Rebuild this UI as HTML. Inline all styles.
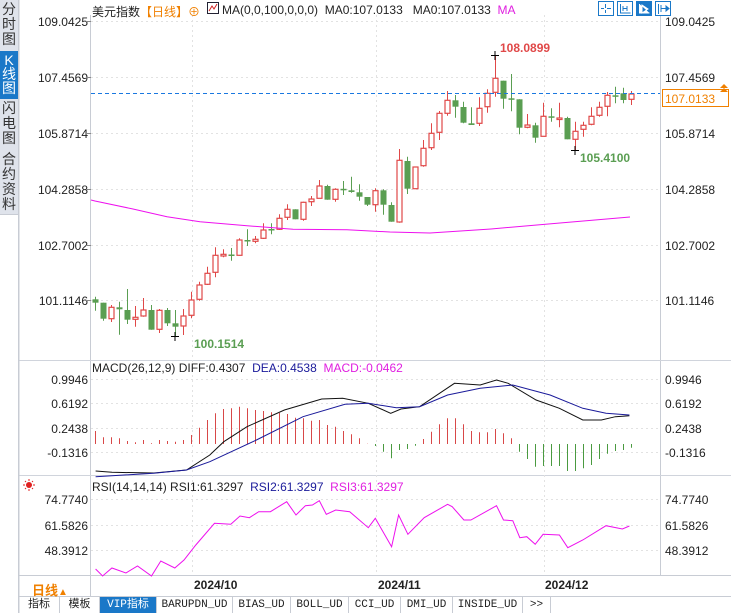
<!DOCTYPE html>
<html><head><meta charset="utf-8"><style>
body{margin:0;width:731px;height:613px;overflow:hidden;background:#fff;font-family:"Liberation Sans","Noto Sans CJK SC",sans-serif;position:relative}
.sb{position:absolute;left:0;width:18px;background:#dfe3eb;color:#333;font-size:14px;line-height:15px;text-align:center;border-bottom:1px solid #c8ccd4}
.lab{position:absolute;font-size:12px;color:#222}
.tab{position:absolute;top:597px;height:16px;border-right:1px solid #c8ccd4;font:11px "Liberation Mono","Noto Sans CJK SC",monospace;color:#222;text-align:center;line-height:16px}
</style></head><body>
<div class="sb" style="top:0;height:49px;padding-top:2px">分<br>时<br>图</div>
<div class="sb" style="top:51px;height:46px;background:#1a78c8;color:#fff;padding-top:2px;line-height:14px">K<br>线<br>图</div>
<div class="sb" style="top:99px;height:49px;padding-top:2px">闪<br>电<br>图</div>
<div class="sb" style="top:150px;height:62px;padding-top:2px">合<br>约<br>资<br>料</div>
<svg id="s" width="731" height="613" style="position:absolute;left:0;top:0"></svg>
<div class="lab" style="left:92px;top:3px;font-size:12px">美元指数<span style="color:#f08000">【日线】</span><span style="color:#f08000">⊕</span></div>
<div class="lab" style="left:222px;top:3px">MA(0,0,100,0,0,0) &nbsp;MA0:107.0133 &nbsp;&nbsp;MA0:107.0133 &nbsp;<span style="color:#e020e0">MA</span></div>
<div class="lab" style="left:92px;top:361px">MACD(26,12,9) DIFF:0.4307 &nbsp;<span style="color:#1a1a9a">DEA:0.4538</span> &nbsp;<span style="color:#e020e0">MACD:-0.0462</span></div>
<div class="lab" style="left:92px;top:480px">RSI(14,14,14) RSI1:61.3297 &nbsp;<span style="color:#1a1a9a">RSI2:61.3297</span> &nbsp;<span style="color:#e020e0">RSI3:61.3297</span></div>
<div class="lab" style="left:32px;top:580px;color:#f08000;font-weight:bold;font-size:13px">日线<span style="font-size:10px">▲</span></div>
<div class="tab" style="left:19px;width:40px">指标</div>
<div class="tab" style="left:60px;width:39px">模板</div>
<div class="tab" style="left:100px;width:56px;background:#1a78c8;color:#fff">VIP指标</div>
<div class="tab" style="left:157px;width:75px">BARUPDN_UD</div>
<div class="tab" style="left:233px;width:57px">BIAS_UD</div>
<div class="tab" style="left:291px;width:57px">BOLL_UD</div>
<div class="tab" style="left:349px;width:51px">CCI_UD</div>
<div class="tab" style="left:401px;width:51px">DMI_UD</div>
<div class="tab" style="left:453px;width:69px">INSIDE_UD</div>
<div class="tab" style="left:523px;width:27px">&gt;&gt;</div>
<script>
var S='';
function L(x1,y1,x2,y2,c,w,d){S+='<line x1="'+x1+'" y1="'+y1+'" x2="'+x2+'" y2="'+y2+'" stroke="'+c+'" stroke-width="'+(w||1)+'"'+(d?' stroke-dasharray="'+d+'"':'')+'/>';}
function T(x,y,t,c,a,sz,fw){S+='<text x="'+x+'" y="'+y+'" fill="'+(c||'#222')+'" font-size="'+(sz||12)+'" text-anchor="'+(a||'start')+'" font-family="Liberation Sans,sans-serif"'+(fw?' font-weight="bold"':'')+'>'+t+'</text>';}
function P(pts,c){S+='<polyline fill="none" stroke="'+c+'" stroke-width="1" points="'+pts.join(' ')+'"/>';}
L(18.5,0,18.5,613,'#c8ccd4');L(90.5,15,90.5,575,'#c8ccd4');L(660.5,15,660.5,575,'#c8ccd4');
L(19,360.5,731,360.5,'#d0d4dc');L(19,475.5,731,475.5,'#d0d4dc');L(19,575.5,731,575.5,'#c8ccd4');L(19,596.5,731,596.5,'#c8ccd4');
L(90.5,575,90.5,597,'#c8ccd4');L(19,0,19,613,'#c8ccd4');
var ph=[[21,'109.0425'],[77,'107.4569'],[133,'105.8714'],[189,'104.2858'],[245,'102.7002'],[300,'101.1146']];
ph.forEach(function(p){L(91,p[0]+.5,660,p[0]+.5,'#e2e2e2',1,'2,3');T(88,p[0]+5,p[1],'#222','end');T(665,p[0]+5,p[1]);L(86,p[0]+.5,91,p[0]+.5,'#888');});
[[379,'0.9946'],[403,'0.6192'],[428,'0.2438'],[452,'-0.1316']].forEach(function(p){L(91,p[0]+.5,660,p[0]+.5,'#e2e2e2',1,'2,3');T(88,p[0]+5,p[1],'#222','end');T(665,p[0]+5,p[1]);});
[[499,'74.7740'],[525,'61.5826'],[550,'48.3912']].forEach(function(p){L(91,p[0]+.5,660,p[0]+.5,'#e2e2e2',1,'2,3');T(88,p[0]+5,p[1],'#222','end');T(665,p[0]+5,p[1]);});
[192,376,544].forEach(function(x){L(x+.5,15,x+.5,575,'#e2e2e2',1,'2,3');});
T(194,589,'2024/10','#222','start',12,1);T(378,589,'2024/11','#222','start',12,1);T(545,589,'2024/12','#222','start',12,1);
var C=[[299.3,302.7,296.7,310.7,0],[302.7,318.7,302.7,320.7,0],[307.3,318.7,305,322,1],[307.3,309.3,301.7,334.7,0],[310,319.7,289,324,0],[317.3,319.3,306,326.7,1],[310,316,298,316.7,1],[310,329.7,305,329.7,0],[310.3,329.3,309,333,1],[310,323.3,308,326,0],[323.3,326.7,310,336,0],[316,326,309,335,1],[300,315.3,291.7,318.3,1],[285,299.3,281.7,300.7,1],[273.3,284.3,266.7,285,1],[255.3,272.3,247.3,277.3,1],[254.3,256,249.3,257.3,1],[254.5,255.5,248,260.7,0],[240,255.3,238.3,255.7,1],[240,241.3,229.3,246,0],[239.3,241.3,236,243.3,1],[230,238.3,223.3,239,1],[229,230.3,223.3,234.3,0],[218.3,229.3,214.3,230,1],[209.3,217.3,204.3,220,1],[209.3,219.3,209.3,219.3,0],[202.3,219.3,201.7,220.7,1],[199,201.7,196,206,1],[186,198.3,180,198.3,1],[186,199.7,184.7,199.7,0],[189.3,199.3,188.3,201.7,1],[188.8,189.8,181,195,0],[190.3,192,176.7,192.7,0],[192.3,196.7,184.3,200.7,0],[197,204.7,197,206,0],[190.7,204.7,188.3,211.7,1],[190.3,204.7,189.3,214.7,0],[205,221.7,202.3,221.7,0],[160.3,222,149,222.7,1],[161,188.7,156.7,194,0],[167,188.7,167,188.7,1],[148.3,165.7,140,166.7,1],[133.3,147.7,123.3,150,1],[113.3,132.3,111,140,1],[100.3,113.3,91,115.7,1],[100.3,106.7,95,117.7,0],[107,122.7,101.7,123.3,0],[123.3,125,107.3,125,0],[108.3,123.3,97.3,126,1],[93.3,106.7,89.3,112.7,1],[78.3,92.3,55,96.7,1],[80.7,98.7,80.7,108.7,0],[98.3,99.3,74,111.3,0],[99.3,127.7,99.3,134.3,0],[125,127.3,114,128.3,1],[125.3,137.7,122.7,142.7,0],[116.3,136.3,102.7,136.3,1],[116.3,117.3,108.3,121.7,0],[118,118.7,102.7,127.3,1],[118,139.3,116.7,139.3,0],[131.3,139.3,121.7,150,1],[125.3,129.3,121.7,136.7,1],[116.3,124.3,107.3,125.3,1],[107.3,115.3,101.7,116.7,1],[95.3,106.3,92,116.3,1],[95.3,96.7,86.7,103.3,0],[93.3,100,87.7,103.3,0],[94,99.3,91,105,1]];
C.forEach(function(c,i){var x=Math.round(95.3+8*i)+.5;var col=c[4]?'#e04848':'#5a9e52';
L(x,c[2],x,c[3],col);var h=Math.max(1.5,c[1]-c[0]);
if(c[4])S+='<rect x="'+(x-2.5)+'" y="'+c[0]+'" width="5" height="'+h+'" fill="#fff" stroke="'+col+'" stroke-width="1.2"/>';
else S+='<rect x="'+(x-3)+'" y="'+c[0]+'" width="6" height="'+h+'" fill="'+col+'"/>';});
P(['91,200','95,201','133,209','167,216.7','200,221.7','247,225.7','293,229.3','347,229.7','390,232','430,233','491,229','560,223','630,217'],'#ee10ee');
L(91,93.5,660,93.5,'#1a78e0',1,'4,3');
S+='<rect x="662.5" y="89.5" width="66" height="17" fill="#fff" stroke="#f08000"/>';T(665,103,'107.0133','#f08000');
S+='<path d="M720 92 l4 -4 l4 4 z M720 88 l4 -4 l4 4 z" fill="#f08000"/>';
T(500,52,'108.0899','#e04848','start',12,1);L(491,55.5,499,55.5,'#000');L(495,51,495,60,'#000');
T(580,162,'105.4100','#5a9e52','start',12,1);L(571,150.5,579,150.5,'#000');L(575,146,575,155,'#000');
T(194,348,'100.1514','#5a9e52','start',12,1);L(171,336.5,179,336.5,'#000');L(175,332,175,341,'#000');
[598,617,636,655].forEach(function(x,i){S+='<rect x="'+x+'.5" y="1.5" width="15" height="14" fill="'+(i==2?'#1a78c8':'#fff')+'" stroke="#1a78c8"/>';});
S+='<path d="M605.5 4v4M605.5 10v3M601 8.5h3M607 8.5h4" stroke="#1a78c8"/><path d="M620.5 4v9h10M623 6v5M627 6v5M623 8.5h4" stroke="#1a78c8" fill="none"/><path d="M639.5 4v9h10M642 5l6 4-6 4z" stroke="#fff" fill="#fff"/><path d="M658.5 4v10M661 5v7M661 8.5h5M666 6l3 2.5-3 2.5z" stroke="#1a78c8" fill="#1a78c8"/>';
S+='<rect x="207.5" y="2.5" width="11" height="11" fill="#fff" stroke="#223"/><path d="M209 11l3-5 2 3 3-5" stroke="#d02020" fill="none"/>';
var H=[431,437.3,437.3,438.3,441,442.3,440,443.3,440,441,441.7,440,435,427.7,420,413.3,409,408.3,406.7,408.3,410,411,412.3,413,414,417.7,418.3,420.7,420,425,426.7,431,434.3,438.3,443.7,446,451.7,458.3,450,449,445.7,439,431.7,424.3,418.3,418.3,424.3,431,432.3,432.3,429,433.3,438.3,451.7,459,466.7,466,466,466,471,471,468.3,465,459,453.7,451,450,447.7];
H.forEach(function(y,i){var x=Math.round(95.3+8*i)+.5;L(x,444,x,y,y<444?'#d84848':'#4a9a40');});
P(['95.6,471','112,472.3','153.8,473','186.5,470','209.8,455','223.8,441.7','247,426.7','284.4,410','321.7,399','342.7,398.3','368.3,403.3','390.7,413.3','401,409','419.6,406.7','454.5,383.3','480.2,385','496.5,380','508.2,383.3','536.1,400','559.4,408.3','582.8,420','601.4,420','615.4,416.7','629.4,415.7'],'#111');
P(['95.6,476.7','153.8,473.3','186.5,470','209.8,461.7','256.4,440','303,416.7','345,404.3','368.3,403.3','396.3,407.7','419.6,406.7','447.6,395','480.2,388.3','512.8,385','550.1,395','582.8,408.3','606,413.3','629.4,415'],'#1a1a9a');
P(['95.6,569','102.6,576','111.9,568','125.9,573','137.5,566','151.5,576','160.8,561','174.8,568','184,560','195.8,545','214.5,523.3','230.8,524.3','240,516','249.4,517.7','258.7,511.7','270.4,511.7','286.7,501.7','296,515','305.4,505.7','312.4,505','319.3,500.7','326.3,514.3','335.7,510','349.7,511.7','368.3,527.7','375.3,518.3','391.6,546.7','398.6,515','407.9,534.3','424.2,517.7','447.6,504.3','452.2,506.7','463.9,520','470.9,520','496.5,505.7','503.5,520','512.8,520.7','519.8,537.7','526.8,536.7','535.2,544.3','543.1,534.3','559.4,535','567.8,547.7','582.8,540','606,525.7','622.4,529','629.4,526'],'#ee10ee');
S+='<circle cx="29" cy="485" r="3" fill="#e02020"/><path d="M29 479v2M29 489v2M23 485h2M33 485h2M25 481l1 1M33 481l-1 1M25 489l1-1M33 489l-1-1" stroke="#e02020"/>';
document.getElementById('s').innerHTML=S;
</script>
</body></html>
